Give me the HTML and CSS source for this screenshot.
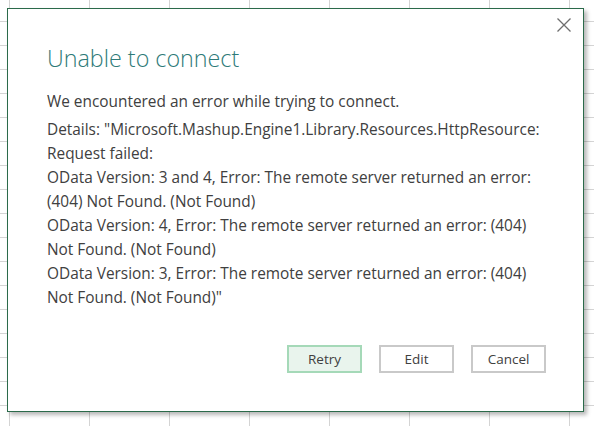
FILE: index.html
```html
<!DOCTYPE html>
<html>
<head>
<meta charset="utf-8">
<link rel="stylesheet" href="styles.css">
</head>
<body>
<div class="dialog">
  <div class="topbar">
    <button class="close" aria-label="Close">
      <svg width="14" height="14" viewBox="0 0 14 14"><path d="M0.5 0.5 L13.5 13.5 M13.5 0.5 L0.5 13.5" stroke="#6e6e6e" stroke-width="1.3" fill="none"/></svg>
    </button>
  </div>
  <div class="content">
    <h1 class="title">Unable to connect</h1>
    <p class="lead">We encountered an error while trying to connect.</p>
    <p class="details">Details: "Microsoft.Mashup.Engine1.Library.Resources.HttpResource: Request failed:<br>OData Version: 3 and 4, Error: The remote server returned an error: (404) Not Found. (Not Found)<br>OData Version: 4, Error: The remote server returned an error: (404) Not Found. (Not Found)<br>OData Version: 3, Error: The remote server returned an error: (404) Not Found. (Not Found)"</p>
  </div>
  <div class="actions">
    <button class="btn primary">Retry</button>
    <button class="btn">Edit</button>
    <button class="btn">Cancel</button>
  </div>
</div>
</body>
</html>
```

FILE: styles.css
```css
html, body {
  margin: 0;
  padding: 0;
}
body {
  width: 594px;
  height: 426px;
  overflow: hidden;
  background-color: #ffffff;
  background-image:
    linear-gradient(to right, #d4d4d4 1px, transparent 1px),
    linear-gradient(to bottom, #d4d4d4 1px, transparent 1px);
  background-size: 80px 24px;
  background-position: 9px 21px;
  font-family: "Open Sans", "Noto Sans", sans-serif;
}
.dialog {
  margin: 8px 0 0 7px;
  width: 575px;
  height: 402px;
  background: #ffffff;
  border: 1px solid #2b6a4a;
  box-shadow: 3px 3px 4px rgba(0, 0, 0, 0.28);
  display: flex;
  flex-direction: column;
}
.topbar {
  display: flex;
  justify-content: flex-end;
  padding: 9px 12px 0 0;
}
.close {
  border: none;
  background: transparent;
  padding: 0;
  width: 14px;
  height: 14px;
  display: flex;
}
.content {
  padding: 0 0 0 39px;
  width: 503px;
  color: #404040;
  font-size: 15.4px;
}
.title {
  margin: 10px 0 0 0;
  font-weight: 300;
  font-size: 23.3px;
  line-height: 32px;
  color: #2e7a78;
}
.lead {
  margin: 16px 0 0 0;
  line-height: 24px;
}
.details {
  margin: 4px 0 0 0;
  line-height: 24px;
}
.actions {
  margin-top: auto;
  display: flex;
  justify-content: flex-end;
  gap: 17px;
  padding: 0 37px 38px 0;
}
.btn {
  width: 75px;
  height: 28px;
  border: 2px solid #c9c9c9;
  background: #ffffff;
  color: #404040;
  font-family: "Open Sans", "Noto Sans", sans-serif;
  font-size: 13.5px;
  padding: 0;
}
.btn.primary {
  background: #e9f4ed;
  border-color: #a5d9b8;
}
```
